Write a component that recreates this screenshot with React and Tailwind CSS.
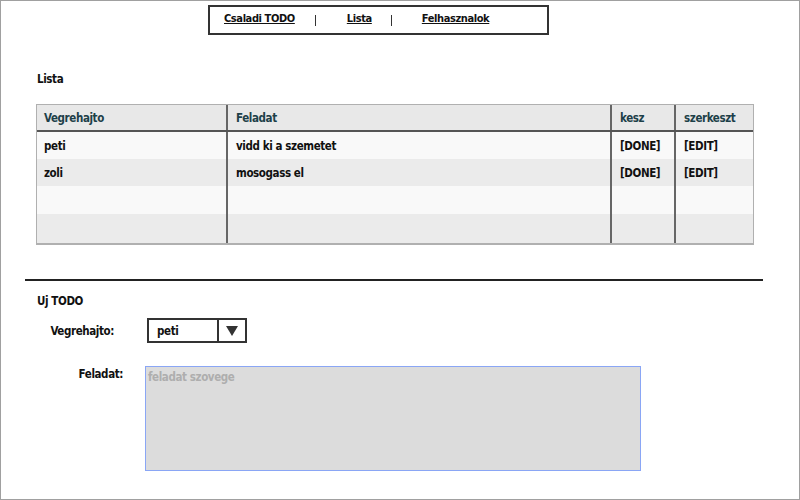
import React from 'react';

const FONT = {
  fontFamily: "'DejaVu Sans Condensed', 'DejaVu Sans', sans-serif",
  letterSpacing: '-0.4px',
};

const ROWS = [
  { who: 'peti', task: 'vidd ki a szemetet', done: '[DONE]', edit: '[EDIT]', bg: 'bg-[#f9f9f9]', h: 'h-[27px]' },
  { who: 'zoli', task: 'mosogass el', done: '[DONE]', edit: '[EDIT]', bg: 'bg-[#ebebeb]', h: 'h-[27px]' },
  { who: '', task: '', done: '', edit: '', bg: 'bg-[#f9f9f9]', h: 'h-[28px]' },
  { who: '', task: '', done: '', edit: '', bg: 'bg-[#ebebeb]', h: 'h-[29px]' },
];

const COLS = 'grid grid-cols-[191px_384px_64px_77px]';

function Row({ row }) {
  return (
    <div className={`${COLS} ${row.h} ${row.bg}`}>
      <div className="pl-[7px] flex items-center border-r-2 border-[#666]">{row.who}</div>
      <div className="pl-[8px] flex items-center border-r-2 border-[#666]">{row.task}</div>
      <div className="pl-[8px] flex items-center border-r-2 border-[#666]">{row.done}</div>
      <div className="pl-[8px] flex items-center">{row.edit}</div>
    </div>
  );
}

// thin separator between the nav links
function Pipe() {
  return <span className="inline-block w-[1px] h-[11px] bg-[#333] mt-[3px]" />;
}

export default function App() {
  return (
    <div
      className="w-[800px] h-[500px] bg-white border border-[#a0a0a0] overflow-hidden text-[11.5px] leading-[16px] font-bold text-[#111]"
      style={FONT}
    >
      {/* top nav */}
      <div className="ml-[207px] mt-[4px] w-[341px] h-[30px] border-2 border-[#333] flex items-center pl-[14px] pb-[2px] text-[11px]">
        <span className="underline">Csaladi TODO</span>
        <span className="ml-[20px] flex"><Pipe /></span>
        <span className="ml-[31px] underline">Lista</span>
        <span className="ml-[19px] flex"><Pipe /></span>
        <span className="ml-[30px] underline">Felhasznalok</span>
      </div>

      <div className="ml-[36px] mt-[36px]">Lista</div>

      {/* table */}
      <div className="ml-[35px] mt-[17px] w-[718px] border border-[#b0b0b0] border-b-2">
        <div className={`${COLS} h-[27px] bg-[#e8e8e8] border-b-2 border-[#555] text-[#1d4048]`}>
          <div className="pl-[7px] flex items-center border-r-2 border-[#666]">Vegrehajto</div>
          <div className="pl-[8px] flex items-center border-r-2 border-[#666]">Feladat</div>
          <div className="pl-[8px] flex items-center border-r-2 border-[#666]">kesz</div>
          <div className="pl-[8px] flex items-center">szerkeszt</div>
        </div>
        {ROWS.map((r, i) => (
          <Row key={i} row={r} />
        ))}
      </div>

      <div className="ml-[24px] mt-[34px] w-[738px] h-[2px] bg-[#222]" />

      <div className="ml-[36px] mt-[12px]">Uj TODO</div>

      <div className="flex items-center mt-[9px]">
        <div className="w-[114px] text-right pr-[1px]">Vegrehajto:</div>
        <div className="ml-[32px] w-[100px] h-[25px] border-2 border-[#333] flex">
          <div className="flex-1 flex items-center pl-[8px]">peti</div>
          <div className="w-[28px] border-l-2 border-[#333] flex items-center justify-center">
            <svg width="12" height="10" viewBox="0 0 12 10">
              <path d="M0 0 H12 L6 10 Z" fill="#333" />
            </svg>
          </div>
        </div>
      </div>

      <div className="flex mt-[23px]">
        <div className="w-[122px] text-right">Feladat:</div>
        <div className="ml-[22px] w-[496px] h-[105px] bg-[#dcdcdc] border border-[#8aa6f5] px-[2px] pt-[2px] text-[#aeaeae]">
          feladat szovege
        </div>
      </div>
    </div>
  );
}
